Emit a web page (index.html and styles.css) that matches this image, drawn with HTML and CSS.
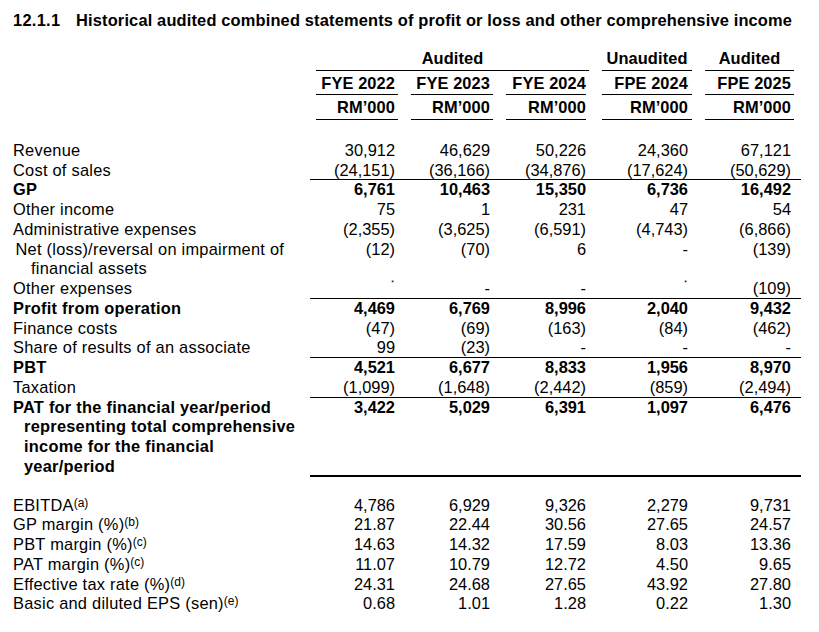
FILE: index.html
```html
<!DOCTYPE html>
<html lang="en">
<head>
<meta charset="utf-8">
<title>12.1.1 Historical audited combined statements</title>
<link rel="stylesheet" href="styles.css">
</head>
<body>
<div class="page">
  <h1 class="title"><span class="sec">12.1.1</span>Historical audited combined statements of profit or loss and other comprehensive income</h1>

  <div class="head">
    <div class="row">
      <div class="lab"></div>
      <div class="hc a1"><span class="hl">Audited</span></div>
      <div class="hc a2"><span class="hl">Unaudited</span></div>
      <div class="hc a3"><span class="hl">Audited</span></div>
    </div>
    <div class="row">
      <div class="lab"></div>
      <div class="hc k1"><span class="hl">FYE 2022</span></div>
      <div class="hc k2"><span class="hl">FYE 2023</span></div>
      <div class="hc k3"><span class="hl">FYE 2024</span></div>
      <div class="hc k4"><span class="hl">FPE 2024</span></div>
      <div class="hc k5"><span class="hl">FPE 2025</span></div>
    </div>
    <div class="row">
      <div class="lab"></div>
      <div class="hc k1"><span class="hl">RM’000</span></div>
      <div class="hc k2"><span class="hl">RM’000</span></div>
      <div class="hc k3"><span class="hl">RM’000</span></div>
      <div class="hc k4"><span class="hl">RM’000</span></div>
      <div class="hc k5"><span class="hl">RM’000</span></div>
    </div>
  </div>

  <div class="body">
    <div class="row">
      <div class="lab">Revenue</div>
      <div class="n c1">30,912</div><div class="n c2">46,629</div><div class="n c3">50,226</div><div class="n c4">24,360</div><div class="n c5">67,121</div>
    </div>
    <div class="row">
      <div class="lab">Cost of sales</div>
      <div class="n c1">(24,151)</div><div class="n c2">(36,166)</div><div class="n c3">(34,876)</div><div class="n c4">(17,624)</div><div class="n c5">(50,629)</div>
    </div>
    <div class="row rule b">
      <div class="lab">GP</div>
      <div class="n c1">6,761</div><div class="n c2">10,463</div><div class="n c3">15,350</div><div class="n c4">6,736</div><div class="n c5">16,492</div>
    </div>
    <div class="row">
      <div class="lab">Other income</div>
      <div class="n c1">75</div><div class="n c2">1</div><div class="n c3">231</div><div class="n c4">47</div><div class="n c5">54</div>
    </div>
    <div class="row">
      <div class="lab">Administrative expenses</div>
      <div class="n c1">(2,355)</div><div class="n c2">(3,625)</div><div class="n c3">(6,591)</div><div class="n c4">(4,743)</div><div class="n c5">(6,866)</div>
    </div>
    <div class="row">
      <div class="lab sub">Net (loss)/reversal on impairment of<br>financial assets</div>
      <div class="n c1">(12)</div><div class="n c2">(70)</div><div class="n c3">6</div><div class="n c4 dash">-</div><div class="n c5">(139)</div>
    </div>
    <div class="row">
      <div class="lab">Other expenses</div>
      <div class="n c1"><span class="ast">*</span></div><div class="n c2">-</div><div class="n c3">-</div><div class="n c4"><span class="ast">*</span></div><div class="n c5">(109)</div>
    </div>
    <div class="row rule b">
      <div class="lab">Profit from operation</div>
      <div class="n c1">4,469</div><div class="n c2">6,769</div><div class="n c3">8,996</div><div class="n c4">2,040</div><div class="n c5">9,432</div>
    </div>
    <div class="row">
      <div class="lab">Finance costs</div>
      <div class="n c1">(47)</div><div class="n c2">(69)</div><div class="n c3">(163)</div><div class="n c4">(84)</div><div class="n c5">(462)</div>
    </div>
    <div class="row">
      <div class="lab">Share of results of an associate</div>
      <div class="n c1">99</div><div class="n c2">(23)</div><div class="n c3">-</div><div class="n c4">-</div><div class="n c5">-</div>
    </div>
    <div class="row rule b">
      <div class="lab">PBT</div>
      <div class="n c1">4,521</div><div class="n c2">6,677</div><div class="n c3">8,833</div><div class="n c4">1,956</div><div class="n c5">8,970</div>
    </div>
    <div class="row">
      <div class="lab">Taxation</div>
      <div class="n c1">(1,099)</div><div class="n c2">(1,648)</div><div class="n c3">(2,442)</div><div class="n c4">(859)</div><div class="n c5">(2,494)</div>
    </div>
    <div class="row rule b total">
      <div class="lab pat">PAT for the financial year/period<br>representing total comprehensive<br>income for the financial<br>year/period</div>
      <div class="n c1">3,422</div><div class="n c2">5,029</div><div class="n c3">6,391</div><div class="n c4">1,097</div><div class="n c5">6,476</div>
    </div>
  </div>

  <div class="body ratios">
    <div class="row">
      <div class="lab">EBITDA<sup>(a)</sup></div>
      <div class="n c1">4,786</div><div class="n c2">6,929</div><div class="n c3">9,326</div><div class="n c4">2,279</div><div class="n c5">9,731</div>
    </div>
    <div class="row">
      <div class="lab">GP margin (%)<sup>(b)</sup></div>
      <div class="n c1">21.87</div><div class="n c2">22.44</div><div class="n c3">30.56</div><div class="n c4">27.65</div><div class="n c5">24.57</div>
    </div>
    <div class="row">
      <div class="lab">PBT margin (%)<sup>(c)</sup></div>
      <div class="n c1">14.63</div><div class="n c2">14.32</div><div class="n c3">17.59</div><div class="n c4">8.03</div><div class="n c5">13.36</div>
    </div>
    <div class="row">
      <div class="lab">PAT margin (%)<sup>(c)</sup></div>
      <div class="n c1">11.07</div><div class="n c2">10.79</div><div class="n c3">12.72</div><div class="n c4">4.50</div><div class="n c5">9.65</div>
    </div>
    <div class="row">
      <div class="lab">Effective tax rate (%)<sup>(d)</sup></div>
      <div class="n c1">24.31</div><div class="n c2">24.68</div><div class="n c3">27.65</div><div class="n c4">43.92</div><div class="n c5">27.80</div>
    </div>
    <div class="row">
      <div class="lab">Basic and diluted EPS (sen)<sup>(e)</sup></div>
      <div class="n c1">0.68</div><div class="n c2">1.01</div><div class="n c3">1.28</div><div class="n c4">0.22</div><div class="n c5">1.30</div>
    </div>
  </div>
</div>
</body>
</html>
```

FILE: styles.css
```css
html, body {
  margin: 0;
  padding: 0;
  background: #ffffff;
}

body {
  font-family: "Liberation Sans", Arial, sans-serif;
  font-size: 16.4px;
  line-height: 19.75px;
  color: #000000;
}

.page {
  padding: 10.5px 0 0 13px;
}

.title {
  margin: 0 0 16.6px 0;
  font-size: 16.4px;
  line-height: 19.75px;
  font-weight: 700;
  letter-spacing: 0.17px;
  white-space: nowrap;
}

.sec {
  display: inline-block;
  width: 63px;
  letter-spacing: 0.3px;
}

.row {
  display: grid;
  grid-template-columns: 297px 89px 95px 96px 102px 109px;
}

.lab {
  letter-spacing: 0.25px;
  white-space: nowrap;
}

/* ---------- header ---------- */
.head .row {
  font-weight: 700;
}

.hc {
  padding-top: 2.5px;
  letter-spacing: 0.1px;
}

.hl {
  display: block;
  padding-bottom: 1px;
  border-bottom: 1px solid #000;
  text-align: right;
}

.a1 { grid-column: 2 / span 3; }
.a1 .hl { margin: 0 1px 0 6px; text-align: center; }
.a2 .hl { margin: 0 0 0 12px; text-align: center; }
.a3 .hl { margin: 0 7px 0 13px; text-align: center; }

.k1 .hl { margin: 0 1px 0 6px; padding-right: 3px; }
.k2 .hl { margin: 0 1px 0 12px; padding-right: 3px; }
.k3 .hl { margin: 0 4px 0 12px; padding-right: 0; }
.k4 .hl { margin: 0 0 0 12px; padding-right: 4px; }
.k5 .hl { margin: 0 7px 0 13px; padding-right: 3px; }

/* ---------- body ---------- */
.body {
  margin-top: 21.3px;
}

.n {
  text-align: right;
  white-space: nowrap;
}

.c1, .c2, .c3, .c4 { padding-right: 4px; }
.c5 { padding-right: 10px; }

.b { font-weight: 700; }

.rule .n {
  box-shadow: 0 -1px 0 0 #000;
}

.total .n {
  border-bottom: 2px solid #000;
}

.sub {
  padding-left: 18px;
  text-indent: -15.5px;
}

.pat {
  padding-left: 11px;
  text-indent: -11px;
}

.ast {
  font-size: 7px;
  line-height: 0;
  vertical-align: 9px;
  padding-right: 1px;
}

.ratios {
  margin-top: 19px;
}

sup {
  font-size: 12px;
  line-height: 0;
  vertical-align: 4px;
  letter-spacing: 0;
}
```
